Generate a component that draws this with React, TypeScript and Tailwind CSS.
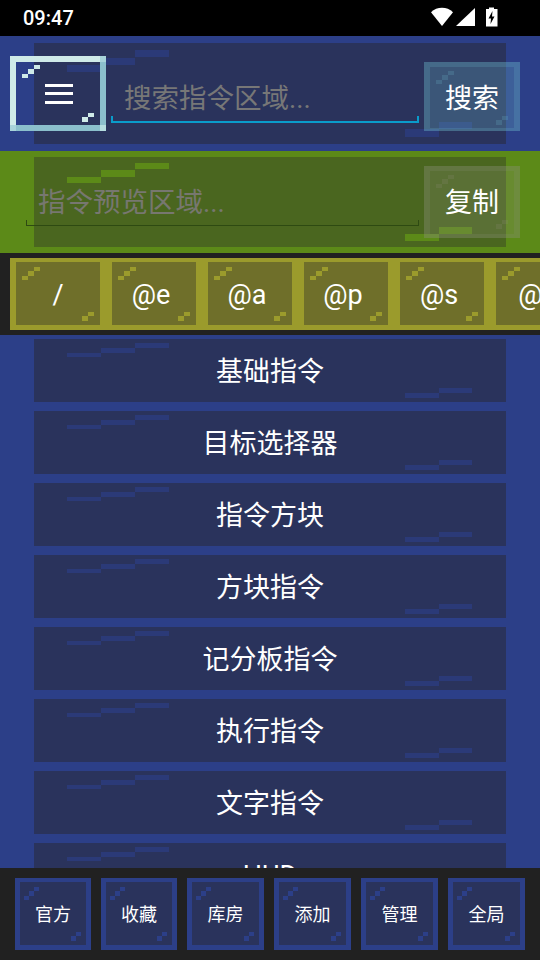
import React from "react";

const FONT = "font-['Roboto','Noto_Sans_CJK_SC',sans-serif]";

function Plate({ bar, className }: { bar: string; className: string }) {
  return (
    <div className={`absolute inset-y-0 left-[34px] w-[472px] ${className}`}>
      <svg
        className="absolute inset-0 h-full w-full"
        viewBox="0 0 472 101"
        preserveAspectRatio="none"
        shapeRendering="crispEdges"
        fill={bar}
      >
        <rect x="33" y="22" width="34" height="7" />
        <rect x="67" y="15" width="34" height="7" />
        <rect x="101" y="7" width="34" height="7" />
        <rect x="371" y="86" width="34" height="8" />
        <rect x="405" y="79" width="33" height="7" />
      </svg>
    </div>
  );
}

function Corners({ color, step = 6, left = 12, right = 12, bottom = 9 }: { color: string; step?: number; left?: number; right?: number; bottom?: number }) {
  return (
    <>
      <svg
        className="absolute top-[9px]"
        style={{ left }}
        width={step * 3}
        height="13"
        fill={color}
        shapeRendering="crispEdges"
      >
        <rect x={step * 2} y="0" width={step} height="4" />
        <rect x={step} y="4" width={step} height="5" />
        <rect x="0" y="9" width={step} height="4" />
      </svg>
      <svg
        className="absolute"
        style={{ right, bottom }}
        width={step * 2}
        height="9"
        fill={color}
        shapeRendering="crispEdges"
      >
        <rect x={step} y="0" width={step} height="4" />
        <rect x="0" y="4" width={step} height="5" />
      </svg>
    </>
  );
}

function StatusBar() {
  return (
    <div className="flex h-[36px] shrink-0 items-center bg-black pl-[23px] text-white">
      <span className="text-[20px] leading-none font-medium font-['Roboto',sans-serif]">09:47</span>
      <svg className="ml-auto mr-[42px]" width="67" height="22" viewBox="0 0 67 22" fill="white">
        <path d="M0 5.2 C3 2.2 7 .8 11 .8 C15 .8 19 2.2 22 5.2 L11 19 Z" />
        <path d="M25 19 L44 1 V19 Z" />
        <path
          fillRule="evenodd"
          d="M55 2 H58 V0.5 H63 V2 H66.5 V19.5 H55 Z M61.5 4 L57.5 11.5 H60 L59.5 17 L63.5 9.5 H61 Z"
        />
      </svg>
    </div>
  );
}

function SearchSection() {
  return (
    <section className="relative flex h-[115px] shrink-0 items-end bg-[#2c3f88] pl-[10px] pr-[20px] pb-[20px]">
      <div className="absolute inset-x-0 top-[7px] bottom-[7px]">
        <Plate bar="#2b3a78" className="bg-[#2a335c]" />
      </div>
      <button className="relative flex h-[75px] w-[96px] shrink-0 items-center justify-center border-[6px] border-t-[#cfeae8] border-r-[#8bbfcc] border-b-[#8bbfcc] border-l-[#cfeae8]">
        <span className="absolute -right-[6px] -top-[6px] h-[6px] w-[6px] bg-[#a8d3da]" />
        <span className="absolute -left-[6px] -bottom-[6px] h-[6px] w-[6px] bg-[#a8d3da]" />
        <span className="absolute -right-[6px] -bottom-[6px] h-[6px] w-[6px] bg-[#b5dde0]" />
        <span className="absolute -left-[6px] -top-[6px] h-[75px] w-[96px]">
          <Corners color="#cfeae8" />
        </span>
        <svg className="absolute left-[29px] top-[22px]" width="28" height="20" fill="white" shapeRendering="crispEdges">
          <rect x="0" y="0" width="28" height="3" />
          <rect x="0" y="8" width="28" height="3" />
          <rect x="0" y="17" width="28" height="3" />
        </svg>
      </button>
      <div className="relative mx-[5px] mb-[8px] flex h-[50px] flex-1 items-center border-b-2 border-b-[#0a9ccb] pl-[13px] pt-[4px]">
        <span className="absolute -bottom-[2px] left-0 h-[7px] w-[2px] bg-[#0a9ccb]" />
        <span className="absolute -bottom-[2px] right-0 h-[7px] w-[2px] bg-[#0a9ccb]" />
        <span className="text-[27.5px] leading-none text-[#777777]">搜索指令区域...</span>
      </div>
      <button className="relative flex h-[69px] w-[96px] shrink-0 items-center justify-center border-x-[6px] border-t-[5px] border-b-[3px] border-[#6fbecc]/40 bg-[#6fbecc]/25 bg-clip-padding pt-[3px] text-[27px] text-white">
        <span className="absolute -left-[6px] -top-[5px] h-[69px] w-[96px]">
          <Corners color="rgba(111,190,204,.2)" bottom={6} />
        </span>
        <span className="relative">搜索</span>
      </button>
    </section>
  );
}

function PreviewSection() {
  return (
    <section className="relative flex h-[102px] shrink-0 items-end bg-[#5c8a18] pl-[10px] pr-[20px] pb-[15px]">
      <div className="absolute inset-x-0 top-[6px] bottom-[6px]">
        <Plate bar="#5c8a18" className="bg-[#4a661f]" />
      </div>
      <div className="relative ml-[16px] mr-[5px] mb-[12px] flex h-[50px] flex-1 items-center border-b border-b-[#2e4a12] pl-[12px] pt-[4px]">
        <span className="absolute -bottom-px left-0 h-[6px] w-px bg-[#2e4a12]" />
        <span className="absolute -bottom-px right-0 h-[6px] w-px bg-[#2e4a12]" />
        <span className="text-[27.5px] leading-none text-[#777770]">指令预览区域...</span>
      </div>
      <button className="relative flex h-[72px] w-[96px] shrink-0 items-center justify-center border-x-[6px] border-t-[5px] border-b-[4px] border-[#8a8e77]/40 bg-[#8a8e77]/25 bg-clip-padding pt-[2px] text-[27px] text-white">
        <span className="absolute -left-[6px] -top-[5px] h-[72px] w-[96px]">
          <Corners color="rgba(138,142,119,.2)" />
        </span>
        <span className="relative">复制</span>
      </button>
    </section>
  );
}

const CHIPS = ["/", "@e", "@a", "@p", "@s", "@r"];

function ChipRow() {
  return (
    <div className="flex h-[82px] shrink-0 overflow-hidden bg-[#212121] pl-[10px] pt-[5px]">
      {CHIPS.map((c) => (
        <div
          key={c}
          className={`relative flex h-[72px] w-[96px] shrink-0 items-center justify-center border-x-[6px] border-t-[4px] border-b-[5px] border-[#9b9b2c] bg-[#6f6f2a] pt-[4px] text-[27px] text-white ${c === "/" ? "" : "pr-[6px]"}`}
        >
          <span className="font-['Roboto',sans-serif]">{c}</span>
          <span className="absolute -left-[6px] -top-[4px] h-[72px] w-[96px]">
            <Corners color="#9b9b2c" />
          </span>
        </div>
      ))}
    </div>
  );
}

const ITEMS = ["基础指令", "目标选择器", "指令方块", "方块指令", "记分板指令", "执行指令", "文字指令", "HUD"];

function CommandList() {
  return (
    <div className="flex min-h-0 flex-1 flex-col gap-[9px] overflow-hidden bg-[#2c3f88] pt-[4px]">
      {ITEMS.map((t) => (
        <div key={t} className="relative flex h-[63px] shrink-0 items-center justify-center pt-[4px] text-[27px] text-white">
          <Plate bar="#2b3a78" className="bg-[#2a335c]" />
          <span className="relative">{t}</span>
        </div>
      ))}
    </div>
  );
}

const TABS = ["官方", "收藏", "库房", "添加", "管理", "全局"];

function BottomBar() {
  return (
    <nav className="grid h-[92px] shrink-0 grid-cols-[76px_76px_77px_77px_77px_77px] items-start gap-x-[10px] bg-[#212121] px-[15px] pt-[10px]">
      {TABS.map((t) => (
        <button
          key={t}
          className="relative flex h-[72px] items-center justify-center border-x-[5px] border-t-[4px] border-b-[5px] border-[#2c3f88] bg-[#2a335c] pt-[1px] text-[18px] text-white"
        >
          <span>{t}</span>
          <span className="absolute -left-[5px] -top-[4px] -right-[5px] h-[72px]">
            <Corners color="#2c3f88" step={5} left={9} right={10} />
          </span>
        </button>
      ))}
    </nav>
  );
}

export default function App() {
  return (
    <div className={`flex h-[960px] w-[540px] flex-col overflow-hidden bg-[#2c3f88] ${FONT}`}>
      <StatusBar />
      <SearchSection />
      <PreviewSection />
      <ChipRow />
      <CommandList />
      <BottomBar />
    </div>
  );
}
